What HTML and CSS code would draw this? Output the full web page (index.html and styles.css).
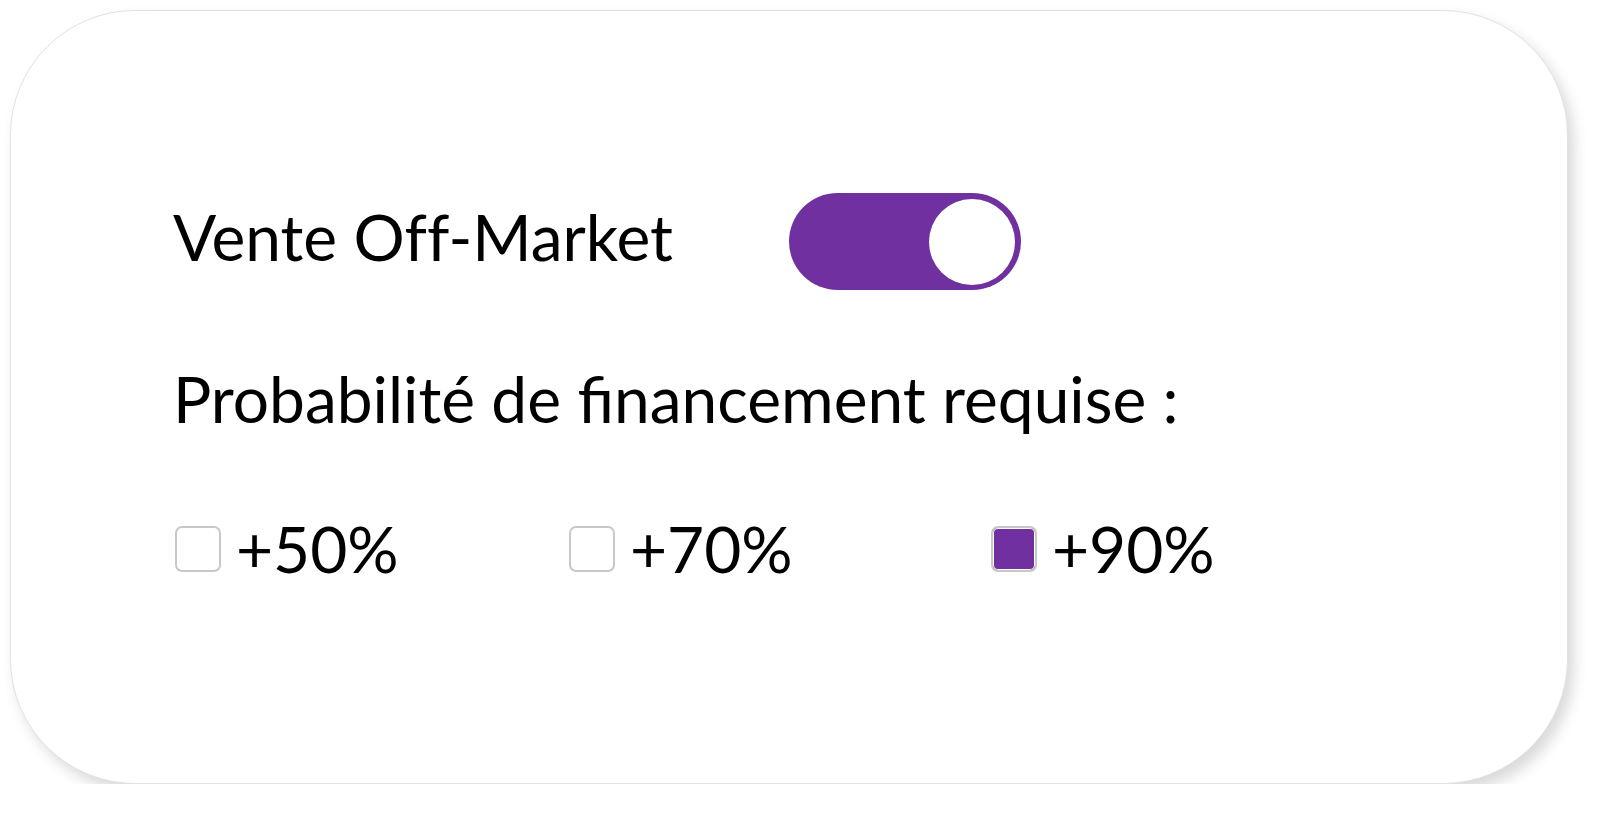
FILE: index.html
```html
<!DOCTYPE html>
<html lang="fr">
<head>
<meta charset="utf-8">
<title>Filtres</title>
<link rel="stylesheet" href="styles.css">
</head>
<body>
  <div class="card">
    <div class="row-toggle">
      <span class="label">Vente Off-Market</span>
      <span class="toggle on"><span class="knob"></span></span>
    </div>
    <div class="question">Probabilité de financement requise :</div>
    <div class="options">
      <label class="option"><span class="box"></span><span class="opt-text">+50%</span></label>
      <label class="option"><span class="box"></span><span class="opt-text">+70%</span></label>
      <label class="option"><span class="box checked"></span><span class="opt-text">+90%</span></label>
    </div>
  </div>
</body>
</html>
```
FILE: styles.css
```css
html, body {
  margin: 0;
  padding: 0;
  background: #ffffff;
}
body {
  padding: 10px 0 0 10px;
  font-family: Lato, "Liberation Sans", sans-serif;
  color: #000;
}
.card {
  box-sizing: border-box;
  width: 1558px;
  height: 774px;
  border: 1px solid #e2e2e2;
  border-radius: 125px;
  background: #fff;
  box-shadow: 6px 8px 14px rgba(0, 0, 0, 0.15);
  padding: 182px 0 0 162px;
}
.row-toggle {
  display: flex;
  align-items: center;
  height: 97px;
}
.label {
  font-size: 64px;
  line-height: 64px;
  margin-bottom: 10px;
  width: 616px;
  font-variant-ligatures: none;
}
.toggle {
  box-sizing: border-box;
  width: 232px;
  height: 97px;
  border-radius: 49px;
  background: #7030a0;
  display: flex;
  align-items: center;
  justify-content: flex-end;
  padding: 0 6px;
}
.knob {
  width: 86px;
  height: 86px;
  border-radius: 50%;
  background: #fff;
}
.question {
  margin-top: 77px;
  font-size: 64px;
  line-height: 64px;
}
.options {
  margin-top: 86px;
  display: grid;
  grid-template-columns: 394px 422px auto;
  padding-left: 2px;
}
.option {
  display: flex;
  align-items: center;
  gap: 15px;
  height: 64px;
}
.box {
  box-sizing: border-box;
  width: 46px;
  height: 46px;
  border: 2px solid #c8c8c8;
  border-radius: 7px;
  background: #fff;
}
.box.checked {
  background: #7030a0;
  box-shadow: inset 0 0 0 1px #fff;
}
.opt-text {
  font-size: 64px;
  line-height: 64px;
}
```
